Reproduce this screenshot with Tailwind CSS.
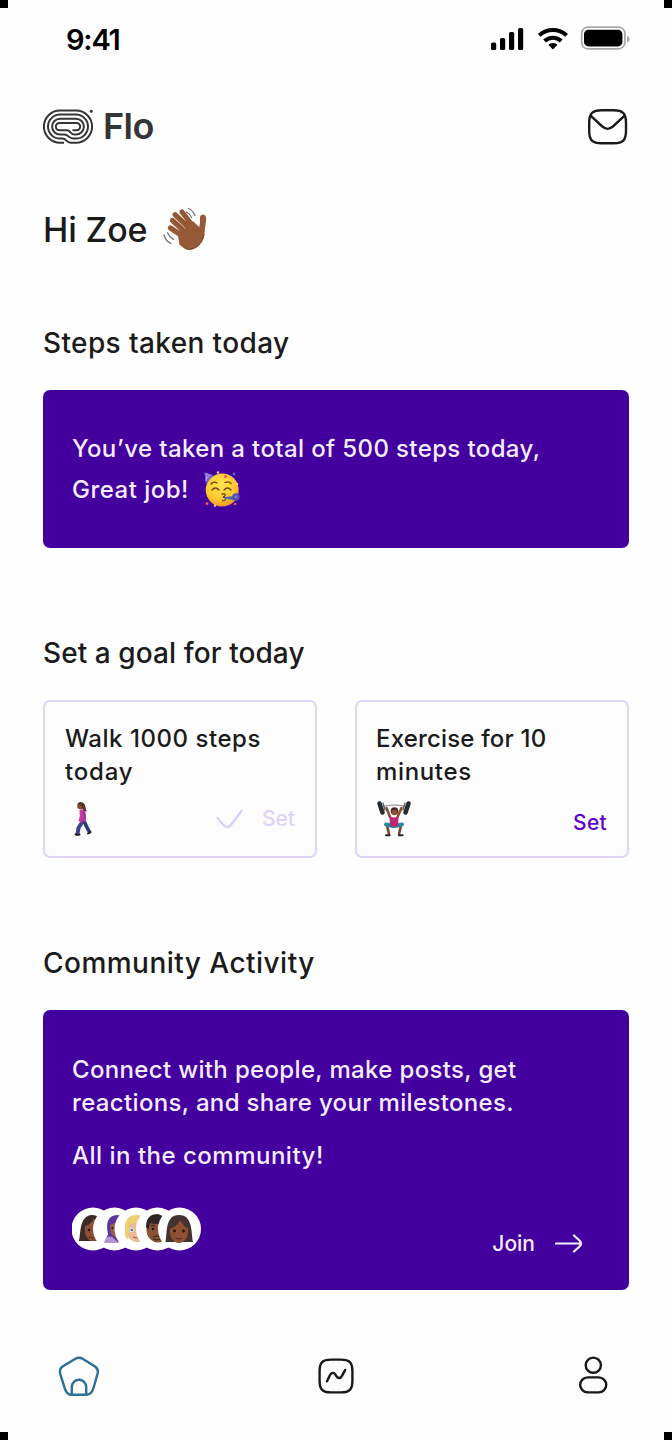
<!DOCTYPE html>
<html lang="en">
<head>
<meta charset="utf-8">
<title>Flo</title>
<script src="https://cdn.jsdelivr.net/npm/@tailwindcss/browser@4"></script>
</head>
<body class="bg-black">
<div class="relative flex h-[1440px] w-[672px] flex-col overflow-hidden bg-[#fefefe] font-['Inter','Liberation_Sans',sans-serif] font-medium text-[#1b1b1b] whitespace-nowrap">
  <i class="absolute left-0 top-0 z-10 size-2 bg-black"></i><i class="absolute right-0 top-0 z-10 size-2 bg-black"></i>
  <i class="absolute bottom-0 left-0 z-10 size-2 bg-black"></i><i class="absolute bottom-0 right-0 z-10 size-2 bg-black"></i>

  <!-- Status bar -->
  <header class="flex h-[78px] items-center justify-between pl-[66px] pr-[42px]">
    <span class="pt-[2px] text-[29px] font-semibold leading-[40px] tracking-[-1.2px] text-black">9:41</span>
    <svg class="h-[30px] w-[140px]" viewBox="490 24 140 30">
      <g fill="#000"><rect x="491" y="42.5" width="5.2" height="7.5" rx="1.6"/><rect x="500" y="38" width="5.2" height="12" rx="1.6"/><rect x="509" y="32" width="5.2" height="18" rx="1.6"/><rect x="518" y="28" width="5.2" height="22" rx="1.6"/></g>
      <g fill="none" stroke="#000" stroke-width="4"><path d="M539.2 35.4a20 20 0 0 1 27.4 0"/><path d="M544.6 41a12.2 12.2 0 0 1 16.6 0"/></g>
      <path d="M548.3 44.8a7 7 0 0 1 9.200 0L552.900 49.600z" fill="#000"/>
      <rect x="581.7" y="27.2" width="43.2" height="21.6" rx="6.2" fill="none" stroke="#a8a8a8" stroke-width="1.700"/>
      <rect x="584" y="29.8" width="38.4" height="16.6" rx="4.4" fill="#000"/>
      <path d="M627 36v6.400c1.600-.6 2.700-1.700 2.700-3.200s-1.100-2.600-2.700-3.200z" fill="#aaa"/>
    </svg>
  </header>

  <!-- Brand -->
  <div class="flex h-[98px] items-center justify-between pl-[43px] pr-[44px]">
    <div class="flex items-center gap-[9px]">
      <svg class="h-[36px] w-[51px]" viewBox="0 0 51 36" fill="none" stroke="#353535" stroke-width="2">
        <path d="M21 33.700H17A16.100 16.100 0 0 1 17 1.500H33A16.100 16.100 0 0 1 33 33.700H27.500C23.500 33.700 23.500 29.600 19.500 29.600H17A12 12 0 0 1 17 5.600H33A12 12 0 0 1 33 29.600H30.500C25.500 29.600 25.500 25.500 21.500 25.500H17A7.900 7.900 0 0 1 17 9.700H33A7.900 7.900 0 0 1 33 25.500H31.500C27.500 25.500 27.500 21.300 24 21.300H16.500A3.700 3.700 0 0 1 16.500 13.900H33.500A3.700 3.700 0 0 1 33.500 21.300H29.500"/>
        <circle cx="48.200" cy="2.300" r="1.500" fill="#353535" stroke="none"/>
      </svg>
      <span class="pb-[2px] text-[36px] font-semibold leading-[48px] tracking-[-0.6px] text-[#353535]">Flo</span>
    </div>
    <svg class="h-[38px] w-[41px]" viewBox="587 108 41 38" fill="none" stroke="#1b1b1b" stroke-width="2.400"><path d="M589.200 123c0-9.500 3.200-12.800 12.300-12.800h12.200c9.100 0 12.300 3.300 12.300 12.800v8c0 9.200-3.200 12.300-12.300 12.300h-12.200c-9.100 0-12.300-3.100-12.300-12.300z"/><path d="M590.300 115.300l12 11.200c3.900 3.200 6.700 3.200 10.600 0l12-11.200"/></svg>
  </div>

  <main class="flex h-[1127px] flex-col px-[43px]">
    <div class="flex h-[108px] items-center gap-[15px]">
      <h1 class="text-[34px] leading-[48px] tracking-[-0.15px]">Hi Zoe</h1>
      <svg class="mt-[-2px] h-[44px] w-[46px]" viewBox="162 207 46 44" fill="none" stroke-linecap="round">
        <path d="M184 231L172.500 220.500M188 227L175 214.700M192 225L182 212M181 235L170.500 228" stroke="#965b36" stroke-width="5.200"/>
        <path d="M178 236l15-15 6 6c1.500-3 .8-6 .9-9 .2-4.500 5.500-4.700 6.100-.8.500 3.700-.5 7-1 11-.3 10-4.500 18-11.500 20.500-6 2-10-.5-14-4z" fill="#965b36"/>
        <path d="M182 228l-7-7M186 224l-8-8M190 220l-6-7" stroke="#7c452a" stroke-width=".8"/><path d="M184 247.500c8 5 18-2 20-13" stroke="#834b2c" stroke-width="1.300"/>
        <path d="M188.500 208.500q4 1.500 6.500 7M186.500 212q3.500 2 5 5.500M164 235q1.500 6 7 8.500M167.500 232.800q2 4.500 6 6.500" stroke="#777" stroke-width="1.300"/>
      </svg>
    </div>

    <h2 class="mt-[39px] text-[28px] leading-[40px] font-medium tracking-[0.38px]">Steps taken today</h2>
    <section class="mt-[27px] h-[158px] shrink-0 rounded-[7px] bg-[#43009e] px-[29px] pt-[38px] text-[24px] leading-[41px] text-[#f6edff]">
      <p class="tracking-[0.38px]">You’ve taken a total of 500 steps today,</p>
      <div class="flex items-center gap-[14px]">
        <span class="tracking-[0.48px]">Great job!</span>
        <svg class="h-[38px] w-[38px]" viewBox="203 470 38 38">
          <defs><radialGradient id="face" cx=".45" cy=".35" r=".7"><stop stop-color="#ffe650"/><stop offset=".65" stop-color="#fdc62e"/><stop offset="1" stop-color="#ed8c24"/></radialGradient></defs>
          <circle cx="222.200" cy="489" r="16.500" fill="url(#face)"/>
          <path d="M204.300 471.200l9 2.800-7.200 9z" fill="#7664cf"/><path d="M207 472l-1 8M210 473l-4 6" stroke="#b5a0ee"/>
          <g fill="none" stroke="#72431c" stroke-width="1.300" stroke-linecap="round"><path d="M211 483q3-3 6-1M225 481.500q4-1.500 6 1M212 489q3.500-4 7 0M224 489q3.500-4 7 0M222 493c4-1 4 2.500 1 3 4 .5 3 4-.5 3.500"/></g>
          <path d="M225 496l9-1v4l-9-1z" fill="#536cac"/><circle cx="236" cy="496" r="3.800" fill="#4f4cb5"/><circle cx="236" cy="496" r="1.600" fill="#8174d5"/>
          <g fill="#ef5365"><circle cx="225.500" cy="475.500" r="1.500"/><circle cx="207" cy="502.500" r="1.500"/><circle cx="235" cy="503" r="1.300"/></g><g fill="#ffcf77"><circle cx="218" cy="471.500" r="1.200"/><circle cx="237" cy="483" r="1.300"/><circle cx="215" cy="504.500" r="1.300"/></g><circle cx="234" cy="473" r="1.400" fill="#3d77c8"/>
        </svg>
      </div>
    </section>

    <h2 class="mt-[85px] text-[28px] leading-[40px] font-medium tracking-[0.08px]">Set a goal for today</h2>
    <section class="mt-[27px] grid shrink-0 grid-cols-2 gap-[38px] text-[24px] leading-[32.5px]">
      <article class="flex h-[158px] flex-col rounded-[7px] border-[2px] border-[#dfd4f8] bg-[#fcfcfc] px-[20px] pt-[21px]">
        <p class="tracking-[0.54px]">Walk 1000 steps<br><span class="tracking-[0.8px]">today</span></p>
        <div class="mt-[11px] flex items-center justify-between">
          <svg class="h-[40px] w-[34px]" viewBox="65 799 34 40" fill="none" stroke-linecap="round">
            <path d="M83 821l-4.500 7-1 6" stroke="#3c4590" stroke-width="4"/><path d="M84 821l2.500 5.500 3 5.500" stroke="#283878" stroke-width="3.600"/><path d="M75.500 834.500h4M88 833.500l2.500-1.500" stroke="#222" stroke-width="2"/>
            <path d="M79.500 810q4-2 6 1l.5 10.500h-7.500q2-6 1-11.500z" fill="#c33da7"/><path d="M83.500 812l1.500 5-3.500 5.500" stroke="#a62f91" stroke-width="2"/><circle cx="80.500" cy="806" r="3.300" fill="#7b4b32"/><path d="M77.500 804q1-3 5-1.500c4 2 2 5 4.500 9l-3.500-1-2-5z" fill="#553326"/>
          </svg>
          <div class="flex items-center gap-[19px] text-[21px] text-[#dfd2f8]"><svg class="h-[22px] w-[27px]" viewBox="216 808 27 22" fill="none" stroke="#dacdf7" stroke-width="2.200" stroke-linecap="round"><path d="M217.500 818l6.500 7.500q3.500 3 6.500 0L241.500 811"/></svg><span class="pt-px">Set</span></div>
        </div>
      </article>
      <article class="flex h-[158px] flex-col rounded-[7px] border-[2px] border-[#dfd4f8] bg-[#fcfcfc] px-[19px] pt-[21px]">
        <p class="tracking-[0.18px]">Exercise for 10<br><span class="tracking-[0.65px]">minutes</span></p>
        <div class="mt-[11px] flex items-center justify-between">
          <svg class="h-[40px] w-[36px]" viewBox="376 799 36 40" fill="none" stroke-linecap="round">
            <path d="M382 806.500q12-3 24 0" stroke="#888" stroke-width="1"/><path d="M379.500 803.500l3 9M408.500 803.500l-3 9" stroke="#252b2e" stroke-width="4.500"/><path d="M383 803l2 7M405 803l-2 7" stroke="#596166" stroke-width="1.300"/>
            <path d="M386.500 808l3.500 9M401.500 808l-4 9" stroke="#8a4b30" stroke-width="2.500"/><path d="M387 825.500l2 8.500M401 825.500l-2 8.500" stroke="#7a4632" stroke-width="2.600"/><path d="M393 826l-7-1.500M395 826l7-1.500" stroke="#28889f" stroke-width="4"/><path d="M389.500 816q5 3 9 0l-.5 10.500h-8z" fill="#b92773"/><circle cx="394.500" cy="811" r="3.800" fill="#452b22"/><circle cx="394.500" cy="812.500" r="2.800" fill="#8b5038"/><path d="M386 835.300h3.500M399 835.300h3.500" stroke="#222" stroke-width="2"/>
          </svg>
          <span class="pr-px pt-[8px] text-[21px] tracking-[0.3px] text-[#6400cc]">Set</span>
        </div>
      </article>
    </section>

    <h2 class="mt-[85px] text-[28px] leading-[40px] font-medium tracking-[0.47px]">Community Activity</h2>
    <section class="mt-[27px] flex h-[280px] shrink-0 flex-col rounded-[7px] bg-[#43009e] pl-[29px] pr-[46px] pt-[44px] text-[24px] leading-[32.5px] text-[#f6edff]">
      <p class="tracking-[0.34px]">Connect with people, make posts, get<br>reactions, and share your milestones.</p>
      <p class="mt-[21px] tracking-[0.5px]">All in the community!</p>
      <div class="mt-[34px] flex items-start justify-between">
        <svg class="h-[44px] w-[130px]" viewBox="72 1207 130 44">
          <circle cx="93" cy="1229" r="21.500" fill="#fff"/>
          <g><path d="M79 1241c2-8 0-25 13-26 12 0 12 18 14 26z" fill="#3d2926"/><path d="M85 1226q7-2 9-8 4 6 8 7c1 8-3 16-9 16s-9-7-8-15z" fill="#8d5033"/><circle cx="89" cy="1230" r="1.300" fill="#24140f"/><path d="M89 1237q4 2 7 0" stroke="#5b211e" fill="none"/></g>
          <circle cx="114.500" cy="1229" r="21.500" fill="#fff"/>
          <path d="M105 1242l3-8q-4-18 9-19c12 1 10 18 12 27z" fill="#5a369f"/><path d="M104 1243q2-8 8-6l7 6z" fill="#b394d5"/><path d="M110 1225q8-5 11 0v10q-7 5-10-2z" fill="#986044"/><circle cx="112.500" cy="1228" r="1.100" fill="#24140f"/>
          <circle cx="136" cy="1229" r="21.500" fill="#fff"/>
          <ellipse cx="137.500" cy="1230" rx="11.500" ry="12" fill="#e9bd99"/><path d="M125 1229c-1-13 9-16 17-13v6q-8 2-12 1l-2 17q-5-5-3-11z" fill="#edd071"/><circle cx="131.500" cy="1230" r="2" fill="#fff"/><circle cx="131.700" cy="1230" r="1.300" fill="#326eb5"/><path d="M133 1237q4 2 7 0" stroke="#a75350" fill="none"/>
          <circle cx="157.500" cy="1229" r="21.500" fill="#fff"/>
          <ellipse cx="158" cy="1230" rx="11.500" ry="12.500" fill="#885235"/><path d="M146 1227q0-13 12-13l7 3v6q-9 2-15 0l-2 7z" fill="#312622"/><circle cx="153" cy="1229" r="1.300" fill="#21150f"/><path d="M151 1226q2-1 4 0M153 1237q4-2 7 0M153 1239q4 2 7 0" stroke="#2e211a" fill="none"/>
          <circle cx="179.500" cy="1229" r="21.500" fill="#fff"/>
          <path d="M165.500 1242c2-8-1-27 13.500-27s12 19 14 27z" fill="#443331"/><path d="M170 1229q8-3 10-9 4 7 8 8c1 8-3 15-9 15s-10-7-9-14z" fill="#8d5033"/><g fill="#24140f"><circle cx="174.500" cy="1231" r="1.400"/><circle cx="183.500" cy="1231" r="1.400"/></g><path d="M176 1238q3 2 6 0" stroke="#642a25" stroke-width="1.400" fill="none"/>
        </svg>
        <div class="flex items-center gap-[20px] pt-[21px] text-[21px]"><span>Join</span><svg class="h-[20px] w-[28px]" viewBox="555 1234 28 20" fill="none" stroke="#f6edff" stroke-width="2.200" stroke-linecap="round"><path d="M556 1243.500h25M574 1235.500l5.500 5q3 3 0 6l-5.500 5"/></svg></div>
      </div>
    </section>
  </main>

  <!-- Tab bar -->
  <nav class="flex h-[137px] items-center justify-between bg-[#fcfcfc] pl-[58px] pr-[63px] pt-[8px]">
    <svg class="h-[42px] w-[42px]" viewBox="58 1355 42 42" fill="none" stroke="#2f6f94" stroke-width="2.400"><path d="M75 1359Q79 1356.500 83 1359L95 1366.500Q99 1369.500 97.500 1374L93.500 1388Q91.500 1394.700 86.500 1394.700H71Q67 1394.700 65 1389L60.300 1374Q59 1369 62.500 1366.500Z"/><path d="M71.800 1394.500V1387a7.200 7.200 0 0 1 14.400 0V1394.500"/></svg>
    <svg class="mr-[6px] h-[42px] w-[42px]" viewBox="315 1355 42 42" fill="none" stroke="#171717" stroke-width="2.400" stroke-linecap="round"><path d="M319.600 1371c0-8.500 3-11.400 11.400-11.400h10c8.400 0 11.400 2.900 11.400 11.400v10c0 8.400-3 11.400-11.400 11.400h-10c-8.400 0-11.400-3-11.400-11.400z"/><path d="M327 1381.300l3-6.300c1.500-2.700 4-2.700 5.300-.6l1.300 2c1.500 2.400 4 2.200 5.400-.5l3.200-6"/></svg>
    <svg class="h-[42px] w-[32px]" viewBox="577 1355 32 42" fill="none" stroke="#171717" stroke-width="2.400"><circle cx="593.300" cy="1365.200" r="7.600"/><rect x="580.200" y="1377.400" width="26" height="15" rx="7.500"/></svg>
  </nav>
</div>
</body>
</html>
